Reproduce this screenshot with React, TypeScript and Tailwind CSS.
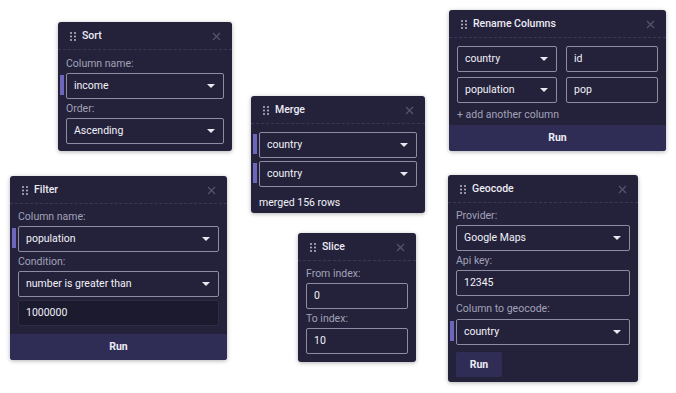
import React from "react";

const font = { fontFamily: "Roboto, 'Liberation Sans', sans-serif" };

const Dots = () => (
  <svg width="6" height="9" viewBox="0 0 6 9" className="shrink-0">
    {[1, 4.5, 8].map((y) =>
      [1, 5].map((x) => <circle key={`${x}-${y}`} cx={x} cy={y} r="0.9" fill="#c9c8d6" />)
    )}
  </svg>
);

const Close = () => (
  <svg width="9" height="9" viewBox="0 0 9 9" className="ml-auto shrink-0">
    <path d="M1 1 L8 8 M8 1 L1 8" stroke="#55546f" strokeWidth="1.2" />
  </svg>
);

const Caret = () => (
  <svg width="8" height="4" viewBox="0 0 8 4" className="ml-auto shrink-0">
    <path d="M0 0 H8 L4 4 Z" fill="#e9e8f0" />
  </svg>
);

const Handle = () => (
  <div className="absolute left-[-7px] top-[1px] h-5 w-1 bg-[#6d66bd]" />
);

const Card = ({
  title,
  className,
  children,
}: {
  title: string;
  className: string;
  children: React.ReactNode;
}) => (
  <div
    className={`absolute flex flex-col rounded-[3px] bg-[#24223b] shadow-[0_1px_4px_rgba(0,0,0,0.3)] ${className}`}
  >
    <div className="flex h-[28px] shrink-0 items-center border-b border-dashed border-[#3a3859] pl-3 pr-[11px] pt-px">
      <Dots />
      <span className="ml-[6px] text-[10.5px] font-medium text-[#ecebf3]">{title}</span>
      <Close />
    </div>
    {children}
  </div>
);

const Label = ({ children, className = "" }: { children: React.ReactNode; className?: string }) => (
  <div className={`text-[10.5px] leading-[19px] text-[#a2a1b7] ${className}`}>{children}</div>
);

const Select = ({ value, handle = false }: { value: string; handle?: boolean }) => (
  <div className="relative flex h-[26px] items-center rounded-[2px] border border-[#8d8ca2] pl-[7px] pr-2 text-[10.5px] text-[#f2f1f7]">
    {handle && <Handle />}
    <span>{value}</span>
    <Caret />
  </div>
);

const Input = ({ value, dark = false }: { value: string; dark?: boolean }) => (
  <div
    className={`flex h-[26px] items-center rounded-[2px] border pl-[7px] text-[10.5px] text-[#f2f1f7] ${
      dark ? "border-[#2d2c45] bg-[#1b1a2f]" : "border-[#8d8ca2]"
    }`}
  >
    {value}
  </div>
);

const RunBar = () => (
  <div className="mt-auto flex h-[26px] items-center justify-center rounded-b-[3px] bg-[#2f2d56] text-[10.5px] font-bold text-[#ecebf3]">
    Run
  </div>
);

export default function App() {
  return (
    <div className="relative h-[393px] w-[676px] overflow-hidden bg-white" style={font}>
      <Card title="Sort" className="left-[58px] top-[22px] h-[129px] w-[174px]">
        <div className="flex flex-col px-2 pt-[4px]">
          <Label>Column name:</Label>
          <Select value="income" handle />
          <Label>Order:</Label>
          <Select value="Ascending" />
        </div>
      </Card>

      <Card title="Merge" className="left-[251px] top-[96px] h-[117px] w-[174px]">
        <div className="flex flex-col gap-[3px] px-2 pt-2">
          <Select value="country" handle />
          <Select value="country" handle />
          <div className="mt-[3px] text-[10.5px] leading-[19px] text-[#f2f1f7]">
            merged 156 rows
          </div>
        </div>
      </Card>

      <Card title="Rename Columns" className="left-[449px] top-[10px] h-[141px] w-[217px]">
        <div className="flex flex-col px-2 pt-2">
          <div className="grid grid-cols-[100px_1fr] gap-x-[9px] gap-y-[5px]">
            <Select value="country" />
            <Input value="id" />
            <Select value="population" />
            <Input value="pop" />
          </div>
          <div className="pt-[2px] text-[10.5px] leading-[19px] text-[#a2a1b7]">+ add another column</div>
        </div>
        <RunBar />
      </Card>

      <Card title="Filter" className="left-[10px] top-[176px] h-[184px] w-[217px]">
        <div className="flex flex-col px-2 pt-[3px]">
          <Label>Column name:</Label>
          <Select value="population" handle />
          <Label>Condition:</Label>
          <Select value="number is greater than" />
          <div className="mt-[3px]">
            <Input value="1000000" dark />
          </div>
        </div>
        <RunBar />
      </Card>

      <Card title="Slice" className="left-[298px] top-[233px] h-[129px] w-[118px]">
        <div className="flex flex-col px-2 pt-[3px]">
          <Label>From index:</Label>
          <Input value="0" />
          <Label>To index:</Label>
          <Input value="10" />
        </div>
      </Card>

      <Card title="Geocode" className="left-[448px] top-[175px] h-[207px] w-[190px]">
        <div className="flex flex-col px-2 pt-[3px]">
          <Label>Provider:</Label>
          <Select value="Google Maps" />
          <Label className="leading-[15px]">Api key:</Label>
          <Input value="12345" />
          <Label className="pt-[3px] leading-[20px]">Column to geocode:</Label>
          <Select value="country" handle />
          <div className="mt-[7px] flex h-[25px] w-[46px] items-center justify-center rounded-[2px] bg-[#2f2d56] text-[10.5px] font-bold text-[#ecebf3]">
            Run
          </div>
        </div>
      </Card>
    </div>
  );
}
